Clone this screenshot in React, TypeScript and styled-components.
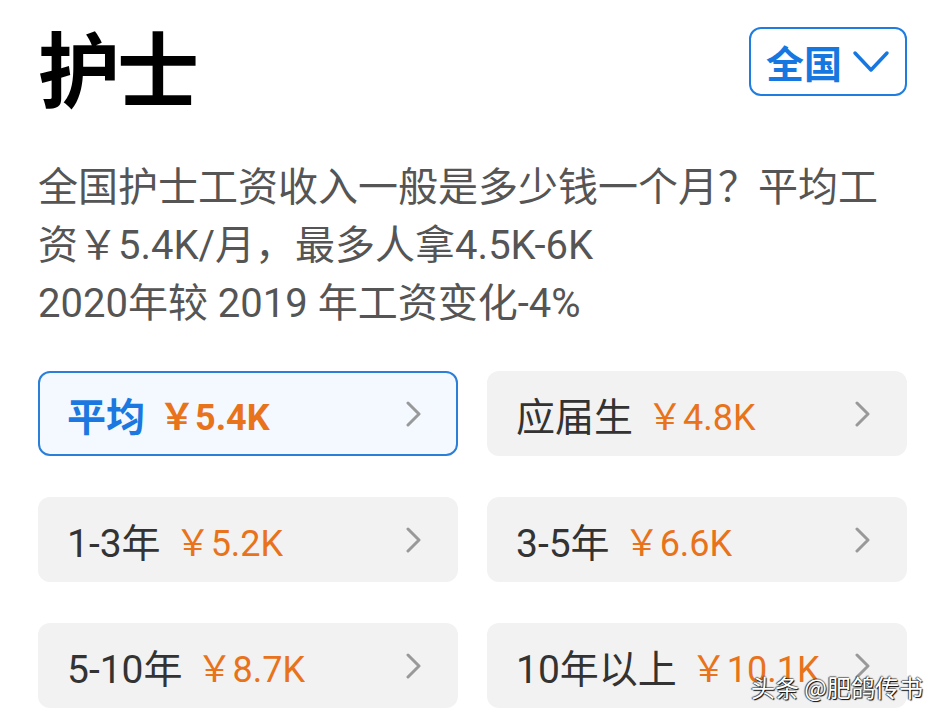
import styled, { createGlobalStyle } from "styled-components";

const GlobalStyle = createGlobalStyle`
  html, body {
    margin: 0;
    padding: 0;
    background: #ffffff;
  }
  body {
    font-family: Roboto, "Noto Sans CJK SC", sans-serif;
  }
`;

const Page = styled.div`
  position: relative;
  width: 945px;
  height: 726px;
  box-sizing: border-box;
  padding: 26px 38px 0;
  overflow: hidden;
`;

const Header = styled.div`
  display: flex;
  justify-content: space-between;
  align-items: flex-start;
`;

const Title = styled.h1`
  margin: 0;
  font-family: "Noto Sans CJK SC", sans-serif;
  font-size: 82px;
  line-height: 80px;
  font-weight: 700;
  color: #000;
  letter-spacing: -3px;
`;

const RegionButton = styled.button`
  margin-top: 1px;
  width: 158px;
  height: 69px;
  box-sizing: border-box;
  display: flex;
  align-items: center;
  gap: 10px;
  padding: 0 0 0 15px;
  border: 2px solid #1f7ddf;
  border-radius: 12px;
  background: #fff;
  color: #1677e0;
  font-family: "Noto Sans CJK SC", sans-serif;
  font-size: 38px;
  font-weight: 700;
  cursor: pointer;
`;

const Intro = styled.div`
  margin-top: 53px;
  color: #555;
  font-size: 40px;
  line-height: 58px;
`;

const IntroLine = styled.div`
  white-space: nowrap;
`;

const Grid = styled.div`
  margin-top: 38px;
  display: grid;
  grid-template-columns: 1fr 1fr;
  column-gap: 29px;
  row-gap: 41px;
`;

const Card = styled.div<{ $active?: boolean }>`
  height: 85px;
  box-sizing: border-box;
  display: flex;
  align-items: center;
  padding: 0 34px 0 27px;
  border-radius: 12px;
  border: 2px solid ${(p) => (p.$active ? "#2a7fd8" : "transparent")};
  background: ${(p) => (p.$active ? "#f3f9ff" : "#f2f2f2")};
`;

const Label = styled.span<{ $active?: boolean }>`
  font-size: 39px;
  color: ${(p) => (p.$active ? "#1a78e0" : "#333")};
  font-weight: ${(p) => (p.$active ? 700 : 400)};
  white-space: nowrap;
`;

const Price = styled.span<{ $active?: boolean }>`
  margin-left: 14px;
  font-size: 36px;
  color: #e8731a;
  font-weight: ${(p) => (p.$active ? 700 : 400)};
  white-space: nowrap;
`;

const Arrow = styled.svg`
  margin-left: auto;
  flex: none;
`;

const Watermark = styled.div`
  position: absolute;
  right: 22px;
  bottom: 22px;
  font-family: "Noto Sans CJK SC", sans-serif;
  font-size: 24px;
  color: #fff;
  text-shadow: 1px 1px 1px #000, -1px 0 1px rgba(0, 0, 0, 0.7),
    0 -1px 1px rgba(0, 0, 0, 0.5);
`;

const items = [
  { label: "平均", price: "￥5.4K", active: true },
  { label: "应届生", price: "￥4.8K" },
  { label: "1-3年", price: "￥5.2K" },
  { label: "3-5年", price: "￥6.6K" },
  { label: "5-10年", price: "￥8.7K" },
  { label: "10年以上", price: "￥10.1K" },
];

const App = (): JSX.Element => {
  return (
    <Page>
      <GlobalStyle />
      <Header>
        <Title>护士</Title>
        <RegionButton>
          全国
          <svg width="38" height="26" viewBox="0 0 38 26">
            <polyline
              points="3,4 19,21 35,4"
              fill="none"
              stroke="#1677e0"
              strokeWidth="3.5"
              strokeLinecap="round"
              strokeLinejoin="round"
            />
          </svg>
        </RegionButton>
      </Header>
      <Intro>
        <IntroLine>全国护士工资收入一般是多少钱一个月？平均工</IntroLine>
        <IntroLine>资￥5.4K/月，最多人拿4.5K-6K</IntroLine>
        <IntroLine>2020年较 2019 年工资变化-4%</IntroLine>
      </Intro>
      <Grid>
        {items.map((it) => (
          <Card key={it.label} $active={it.active}>
            <Label $active={it.active}>{it.label}</Label>
            <Price $active={it.active}>{it.price}</Price>
            <Arrow width="16" height="26" viewBox="0 0 16 26">
              <polyline
                points="2,2 13,13 2,24"
                fill="none"
                stroke="#999"
                strokeWidth="3"
                strokeLinecap="round"
                strokeLinejoin="round"
              />
            </Arrow>
          </Card>
        ))}
      </Grid>
      <Watermark>头条 @肥鸽传书</Watermark>
    </Page>
  );
};

export default App;
